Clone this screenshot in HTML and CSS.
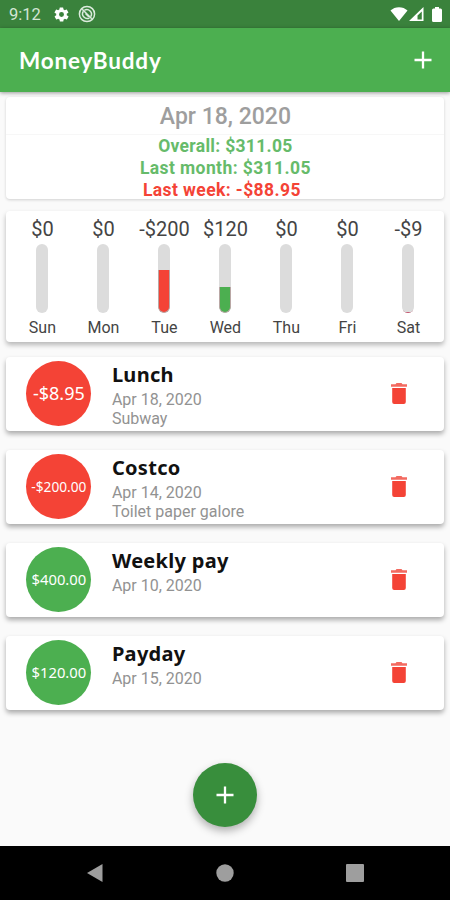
FILE: index.html
```
<!DOCTYPE html>
<html lang="en">
<head>
<meta charset="utf-8">
<title>MoneyBuddy</title>
<link rel="stylesheet" href="styles.css">
</head>
<body>
<div class="status">
  <span class="clock">9:12</span>
  <svg class="gear" viewBox="0 0 24 24"><path fill-rule="evenodd" d="M19.4 13a7.500 7.500 0 0 0 0-2l2.100-1.600a.5.5 0 0 0 .1-.6l-2-3.500a.5.5 0 0 0-.6-.2l-2.500 1a7.300 7.300 0 0 0-1.700-1l-.4-2.600a.5.5 0 0 0-.5-.5h-4a.5.5 0 0 0-.5.500l-.4 2.600a7.300 7.300 0 0 0-1.700 1l-2.500-1a.5.5 0 0 0-.6.2l-2 3.500a.5.5 0 0 0 .1.600L4.600 11a7.500 7.500 0 0 0 0 2l-2.100 1.600a.5.5 0 0 0-.1.600l2 3.500c.1.200.4.300.6.200l2.500-1a7.300 7.300 0 0 0 1.700 1l.4 2.600c0 .3.200.5.500.5h4c.3 0 .5-.2.500-.5l.4-2.600a7.300 7.300 0 0 0 1.700-1l2.500 1c.2.100.5 0 .6-.2l2-3.500a.5.5 0 0 0-.1-.6zM12 15.500a3.500 3.500 0 1 1 0-7 3.500 3.500 0 0 1 0 7z"/></svg>
  <svg class="sync" viewBox="0 0 18 18"><circle cx="9" cy="9" r="7.600"/><path d="M6.500 5.200a4.600 4.600 0 0 1 6.300 6.300M11.500 12.800a4.600 4.600 0 0 1-6.300-6.300M4.200 4.200l9.600 9.600M7.500 8.500l3 3"/></svg>
  <span class="spacer"></span>
  <svg class="wifi" viewBox="0 0 18 14"><path d="M9 14 .5 3.600C2.800 1.500 5.700.3 9 .3s6.200 1.200 8.500 3.300z"/></svg>
  <svg class="cell" viewBox="0 0 15 14"><path fill-rule="evenodd" d="M0 14 14.500 0v14zM8.500 12.500h4.300V4.500L8.500 8.500z"/></svg>
  <svg class="battery" viewBox="0 0 10 15"><path d="M3 0h4v1.500h1.500Q10 1.500 10 3v10.500q0 1.500-1.500 1.500h-7Q0 15 0 13.500V3q0-1.500 1.500-1.500H3z"/></svg>
</div>
<header class="appbar">
  <h1>MoneyBuddy</h1>
  <svg class="plus" viewBox="0 0 18 18"><path d="M9 .5v17M.5 9h17"/></svg>
</header>
<main>
  <section class="card summary">
    <h2>Apr 18, 2020</h2>
    <div class="totals">
      <p class="overall">Overall: $311.05</p>
      <p class="month">Last month: $311.05</p>
      <p class="week">Last week: -$88.95</p>
    </div>
  </section>
  <section class="card chart">
    <div class="day"><b>$0</b><i></i><span>Sun</span></div>
    <div class="day"><b>$0</b><i></i><span>Mon</span></div>
    <div class="day"><b>-$200</b><i><em class="red" style="height:62.500%"></em></i><span>Tue</span></div>
    <div class="day"><b>$120</b><i><em class="green" style="height:38%"></em></i><span>Wed</span></div>
    <div class="day"><b>$0</b><i></i><span>Thu</span></div>
    <div class="day"><b>$0</b><i></i><span>Fri</span></div>
    <div class="day"><b>-$9</b><i><em class="trace" style="height:5%"></em></i><span>Sat</span></div>
  </section>
  <article class="card item">
    <div class="amount red large">-$8.95</div>
    <div class="info"><h3>Lunch</h3><p>Apr 18, 2020</p><p>Subway</p></div>
    <svg class="trash" viewBox="0 0 16 21"><path d="M1.200 5h13.600v14q0 2-2 2H3.200q-2 0-2-2z"/><path class="lid" d="M0 1.200h4.500L5.500 0h5l1 1.200H16v2.500H0z"/></svg>
  </article>
  <article class="card item">
    <div class="amount red small">-$200.00</div>
    <div class="info"><h3>Costco</h3><p>Apr 14, 2020</p><p>Toilet paper galore</p></div>
    <svg class="trash" viewBox="0 0 16 21"><path d="M1.200 5h13.600v14q0 2-2 2H3.200q-2 0-2-2z"/><path class="lid" d="M0 1.200h4.500L5.500 0h5l1 1.200H16v2.500H0z"/></svg>
  </article>
  <article class="card item">
    <div class="amount green">$400.00</div>
    <div class="info"><h3>Weekly pay</h3><p>Apr 10, 2020</p></div>
    <svg class="trash" viewBox="0 0 16 21"><path d="M1.200 5h13.600v14q0 2-2 2H3.200q-2 0-2-2z"/><path class="lid" d="M0 1.200h4.500L5.500 0h5l1 1.200H16v2.500H0z"/></svg>
  </article>
  <article class="card item">
    <div class="amount green">$120.00</div>
    <div class="info"><h3>Payday</h3><p>Apr 15, 2020</p></div>
    <svg class="trash" viewBox="0 0 16 21"><path d="M1.200 5h13.600v14q0 2-2 2H3.200q-2 0-2-2z"/><path class="lid" d="M0 1.200h4.500L5.500 0h5l1 1.200H16v2.500H0z"/></svg>
  </article>
  <div class="fab"><svg class="plus" viewBox="0 0 18 18"><path d="M9 .5v17M.5 9h17"/></svg></div>
</main>
<nav>
  <svg viewBox="0 0 20 20"><path d="M2 10 17.500 1v18z"/></svg>
  <svg viewBox="0 0 20 20"><circle cx="10" cy="10" r="8.700"/></svg>
  <svg viewBox="0 0 20 20"><rect x="1" y="1" width="18" height="18" rx="1"/></svg>
</nav>
</body>
</html>
```
FILE: styles.css
```
* { box-sizing: border-box; margin: 0; padding: 0; }
body {
  width: 450px; height: 900px; overflow: hidden;
  display: flex; flex-direction: column;
  background: #fafafa; font-family: Roboto, sans-serif;
}
.status {
  height: 28px; flex: none; background: #3a823c;
  display: flex; align-items: center; padding: 0 8px 0 9px;
}
.status svg { fill: #fff; }
.clock { color: #d3e6d4; font-size: 16.500px; width: 44px; padding-top: 1px; }
.gear { width: 17px; height: 17px; }
.status .sync { width: 18px; height: 18px; margin-left: 8px; fill: none; stroke: #dcebdd; stroke-width: 1.500; }
.spacer { flex: 1; }
.wifi { width: 18px; height: 14px; }
.cell { width: 15px; height: 14px; margin-left: 1px; }
.battery { width: 10px; height: 15px; margin-left: 8px; }
.appbar {
  height: 64px; flex: none; background: #4caf50; position: relative;
  display: flex; align-items: center; justify-content: space-between;
  padding: 0 18px 0 19px; box-shadow: 0 1px 4px rgba(0,0,0,.4);
}
.appbar h1 { color: #fff; font: 700 22.500px/28px Lato, sans-serif; letter-spacing: .8px; padding-top: 2px; }
.plus { width: 18px; height: 18px; fill: none; stroke: #fff; stroke-width: 2.300; }
main { flex: 1; padding: 5px 5.600px 0 6.400px; display: flex; flex-direction: column; }
.card { flex: none; background: #fff; border-radius: 4px; }
.summary { height: 102px; text-align: center; box-shadow: 0 1px 3px rgba(0,0,0,.17); }
.summary h2 {
  height: 38px; border-bottom: 1px solid #f7f7f7;
  color: #9e9e9e; font-weight: 500; font-size: 23px; line-height: 39px;
}
.totals { font-size: 17.500px; line-height: 22px; font-weight: 700; margin-top: -.5px; }
.overall, .month { color: #66bb6a; letter-spacing: .3px; }
.month { letter-spacing: .4px; }
.week { color: #f44336; letter-spacing: .4px; padding-right: 7px; }
.chart {
  height: 131px; margin-top: 12px; display: grid; grid-template-columns: repeat(7, 1fr);
  padding: 4px 5.500px 0; box-shadow: 0 3px 5px rgba(0,0,0,.27);
}
.day { display: flex; flex-direction: column; align-items: center; color: #444; }
.day b { font-weight: 400; font-size: 20px; line-height: 28px; white-space: nowrap; }
.day i {
  width: 12px; height: 69px; margin-top: 1px; border-radius: 6px;
  overflow: hidden; background: #dcdcdc; display: flex; align-items: flex-end;
}
.day em { width: 100%; border: 1px solid #b9a7a5; border-top: 0; border-radius: 0 0 6px 6px; }
.day .trace { background: #dcdcdc; border-color: #c4506a; }
.day span { font-size: 16px; line-height: 20px; margin-top: 5px; }
.red { background: #f44336; }
.green { background: #4caf50; }
.item {
  height: 74px; margin-top: 19px; display: flex; padding: 4px 37.500px 0 20px;
  box-shadow: 0 3px 5px rgba(0,0,0,.32);
}
.chart + .item { margin-top: 15px; }
.amount {
  width: 65px; height: 65px; border-radius: 50%; color: #fff;
  font: 14.800px/65px "Noto Sans", sans-serif; white-space: nowrap;
  display: flex; justify-content: center;
}
.large { font-size: 18px; }
.small { font-size: 13.700px; }
.info { flex: 1; padding-left: 20.500px; }
.info h3 { font: 700 20px/28px "Noto Sans", sans-serif; color: #111; letter-spacing: .3px; }
.info p { font-size: 16px; line-height: 19px; color: #929292; }
.info h3 + p { margin-top: 1px; }
.trash { width: 16px; height: 21px; margin-top: 22px; fill: #f44336; }
.trash .lid { fill: #f36a60; }
.fab {
  width: 64px; height: 64px; margin: 53px auto 0; border-radius: 50%; background: #388e3c;
  display: flex; align-items: center; justify-content: center;
  box-shadow: 0 4px 8px rgba(0,0,0,.3);
}
nav {
  height: 54px; flex: none; background: #000;
  display: flex; align-items: center; justify-content: space-between; padding: 0 85px;
}
nav svg { width: 20px; height: 20px; fill: #9e9e9e; }
```
